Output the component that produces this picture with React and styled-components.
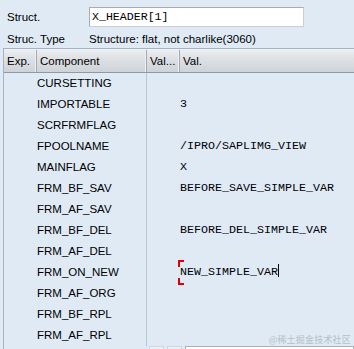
import React from "react";
import styled, { createGlobalStyle } from "styled-components";

const Global = createGlobalStyle`
  html, body { margin: 0; padding: 0; background: #dfeaf5; }
  body { width: 354px; height: 349px; overflow: hidden; }
`;

const Page = styled.div`
  position: relative;
  width: 354px;
  height: 349px;
  background: #dfeaf5;
  font-family: "Liberation Sans", Arial, sans-serif;
  font-size: 11.5px;
  color: #000;
  display: flex;
  flex-direction: column;
`;

const Form = styled.div`
  display: flex;
  flex-direction: column;
  padding: 7px 0 0 7px;
`;

const FieldRow = styled.div`
  display: flex;
  align-items: center;
  height: ${(p) => p.$h}px;
  margin-top: ${(p) => p.$mt || 0}px;
`;

const Label = styled.div`
  width: 82px;
  flex: none;
`;

const Input = styled.div`
  box-sizing: border-box;
  width: 215px;
  height: 20px;
  background: #fff;
  border: 1px solid #a6adb6;
  border-right-color: #c9ced4;
  border-bottom-color: #c9ced4;
  font-family: "Liberation Mono", "Courier New", monospace;
  font-size: 11.6px;
  line-height: 18px;
  padding-left: 2px;
`;

const Table = styled.div`
  margin: 0 0 0 3px;
  border-left: 1px solid #a3b4c6;
  border-top: 1px solid #a3b4c6;
  flex: 1;
  display: flex;
  flex-direction: column;
`;

const Header = styled.div`
  display: grid;
  grid-template-columns: 33px 110px 33px 1fr;
  height: 22px;
  border-top: 1px solid #eef1f4;
  border-bottom: 1px solid #8e99a5;
  background: linear-gradient(#eceef1, #dcdfe3 45%, #cfd3d8 100%);
`;

const HeadCell = styled.div`
  display: flex;
  align-items: center;
  padding-left: 3px;
  border-right: ${(p) => (p.$last ? "none" : "1px solid #a0a9b3")};
  box-shadow: ${(p) => (p.$last ? "none" : "inset -1px 0 0 #eef0f3")};
  white-space: nowrap;
  overflow: hidden;
`;

const Body = styled.div`
  display: grid;
  grid-template-columns: 143px 1fr;
  flex: 1;
`;

const NameCol = styled.div`
  display: flex;
  flex-direction: column;
  border-right: 1px solid #b8c6d4;
  padding-left: 33px;
`;

const ValCol = styled.div`
  display: flex;
  flex-direction: column;
  padding-left: 33px;
  font-family: "Liberation Mono", "Courier New", monospace;
  font-size: 11.67px;
`;

const Cell = styled.div`
  position: relative;
  height: 21px;
  line-height: 21px;
  white-space: nowrap;
`;

const Bracket = styled.svg`
  position: absolute;
  z-index: 3;
  left: -2px;
  top: -2px;
  width: 6px;
  height: 25px;
`;

const Caret = styled.span`
  display: inline-block;
  width: 1px;
  height: 13px;
  background: #000;
  vertical-align: -2px;
`;

const Footer = styled.div`
  display: flex;
  gap: 3px;
  height: 5px;
  padding-left: 145px;
`;

const FootBtn = styled.div`
  width: 15px;
  height: 8px;
  background: #eef1f4;
  border: 1px solid #d0d6dd;
  box-sizing: border-box;
`;

const FootField = styled.div`
  flex: 1;
  height: 8px;
  background: #fff;
  border: 1px solid #a8b0b9;
  box-sizing: border-box;
`;

const Watermark = styled.div`
  position: absolute;
  right: 3px;
  bottom: 3px;
  font-family: "Noto Sans CJK SC", sans-serif;
  font-size: 9px;
  color: #b6bec6;
  letter-spacing: 0.2px;
`;

const rows = [
  ["CURSETTING", ""],
  ["IMPORTABLE", "3"],
  ["SCRFRMFLAG", ""],
  ["FPOOLNAME", "/IPRO/SAPLIMG_VIEW"],
  ["MAINFLAG", "X"],
  ["FRM_BF_SAV", "BEFORE_SAVE_SIMPLE_VAR"],
  ["FRM_AF_SAV", ""],
  ["FRM_BF_DEL", "BEFORE_DEL_SIMPLE_VAR"],
  ["FRM_AF_DEL", ""],
  ["FRM_ON_NEW", "NEW_SIMPLE_VAR", true],
  ["FRM_AF_ORG", ""],
  ["FRM_BF_RPL", ""],
  ["FRM_AF_RPL", ""],
];

export default function App() {
  return (
    <Page>
      <Global />
      <Form>
        <FieldRow $h={20}>
          <Label>Struct.</Label>
          <Input>X_HEADER[1]</Input>
        </FieldRow>
        <FieldRow $h={18} $mt={3}>
          <Label>Struc. Type</Label>
          <span>Structure: flat, not charlike(3060)</span>
        </FieldRow>
      </Form>
      <Table>
        <Header>
          <HeadCell>Exp.</HeadCell>
          <HeadCell>Component</HeadCell>
          <HeadCell>Val...</HeadCell>
          <HeadCell $last>Val.</HeadCell>
        </Header>
        <Body>
          <NameCol>
            {rows.map(([n]) => (
              <Cell key={n}>{n}</Cell>
            ))}
          </NameCol>
          <ValCol>
            {rows.map(([n, v, active]) => (
              <Cell key={n}>
                {active && (
                  <Bracket viewBox="0 0 6 25">
                    <path d="M1 7V1H6M1 18V24H6" fill="none" stroke="#e00000" strokeWidth="2" />
                  </Bracket>
                )}
                {v}
                {active && <Caret />}
              </Cell>
            ))}
          </ValCol>
        </Body>
        <Footer>
          <FootBtn />
          <FootBtn />
          <FootField />
        </Footer>
      </Table>
      <Watermark>@稀土掘金技术社区</Watermark>
    </Page>
  );
}
